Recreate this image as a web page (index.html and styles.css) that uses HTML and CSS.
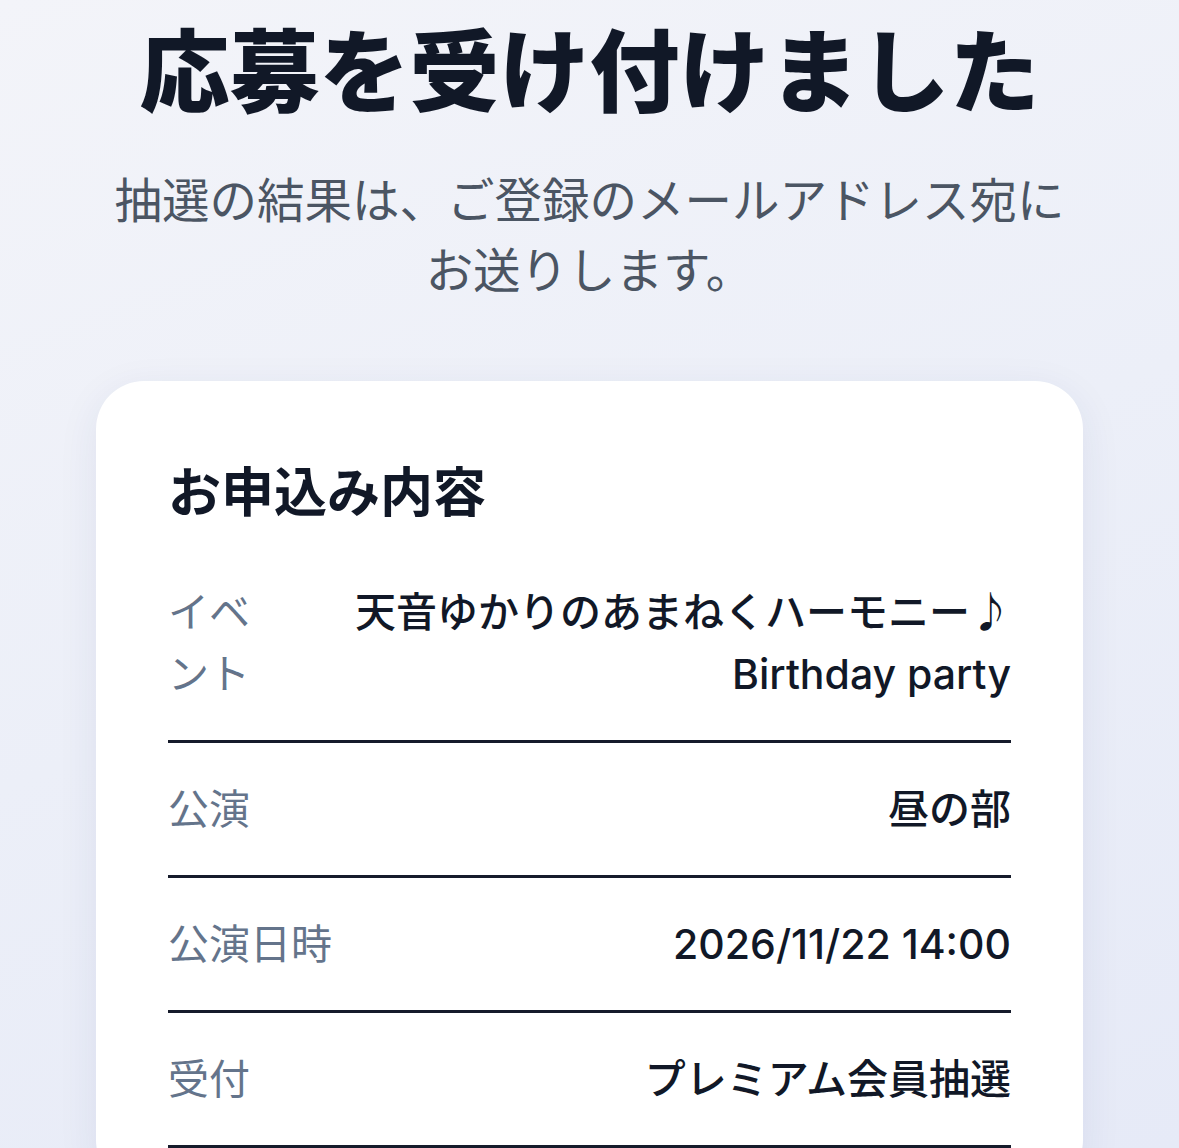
FILE: index.html
```html
<!DOCTYPE html>
<html lang="ja">
<head>
    <meta charset="UTF-8">
    <title>応募完了</title>
    <meta name="viewport" content="width=device-width, initial-scale=1.0">
    <link rel="stylesheet" href="styles.css">
</head>
<body>
    <main class="page">
        <!-- Completion message -->
        <section class="intro">
            <h1 class="title">応募を受け付けました</h1>
            <p class="lead">抽選の結果は、ご登録のメールアドレス宛に<br>お送りします。</p>
        </section>

        <!-- Application summary -->
        <section class="card">
            <h2 class="card-title">お申込み内容</h2>
            <dl class="details">
                <div class="row">
                    <dt class="label">イベント</dt>
                    <dd class="value">天音ゆかりのあまねくハーモニー♪ Birthday party</dd>
                </div>
                <div class="row">
                    <dt class="label">公演</dt>
                    <dd class="value">昼の部</dd>
                </div>
                <div class="row">
                    <dt class="label">公演日時</dt>
                    <dd class="value">2026/11/22 14:00</dd>
                </div>
                <div class="row">
                    <dt class="label">受付</dt>
                    <dd class="value">プレミアム会員抽選</dd>
                </div>
            </dl>
        </section>
    </main>
</body>
</html>
```
FILE: styles.css
```css
/* General Styles */
html, body {
    height: 100%;
}

body {
    margin: 0;
    padding: 0;
    font-family: Inter, "Noto Sans CJK JP", sans-serif;
    background: linear-gradient(160deg, #f3f4f9 0%, #eceff8 50%, #e6eaf7 100%);
    color: #111827;
    overflow: hidden;
}

.page {
    padding: 14px 96px 0;
}

/* Intro */
.intro {
    text-align: center;
}

.title {
    margin: 0;
    font-size: 90px;
    font-weight: 800;
    line-height: 1.3;
    color: #111827;
}

.lead {
    margin: 35px 0 0;
    font-size: 47.5px;
    line-height: 70px;
    color: #4b5563;
}

/* Card */
.card {
    margin-top: 75px;
    background-color: #ffffff;
    border-radius: 48px;
    padding: 72px 72px 40px;
    box-shadow: 0 10px 40px rgba(40, 55, 110, 0.08);
}

.card-title {
    margin: 0 0 13px;
    font-size: 53px;
    font-weight: 700;
    line-height: 80px;
    color: #111827;
}

/* Details list */
.details {
    margin: 0;
}

.row {
    display: flex;
    justify-content: space-between;
    gap: 16px;
    padding: 35px 0;
    border-bottom: 3px solid #161b2b;
    font-size: 41px;
    line-height: 62px;
}

.label {
    margin: 0;
    color: #64748b;
}

.value {
    margin: 0;
    text-align: right;
    font-weight: 500;
    color: #111827;
}
```
